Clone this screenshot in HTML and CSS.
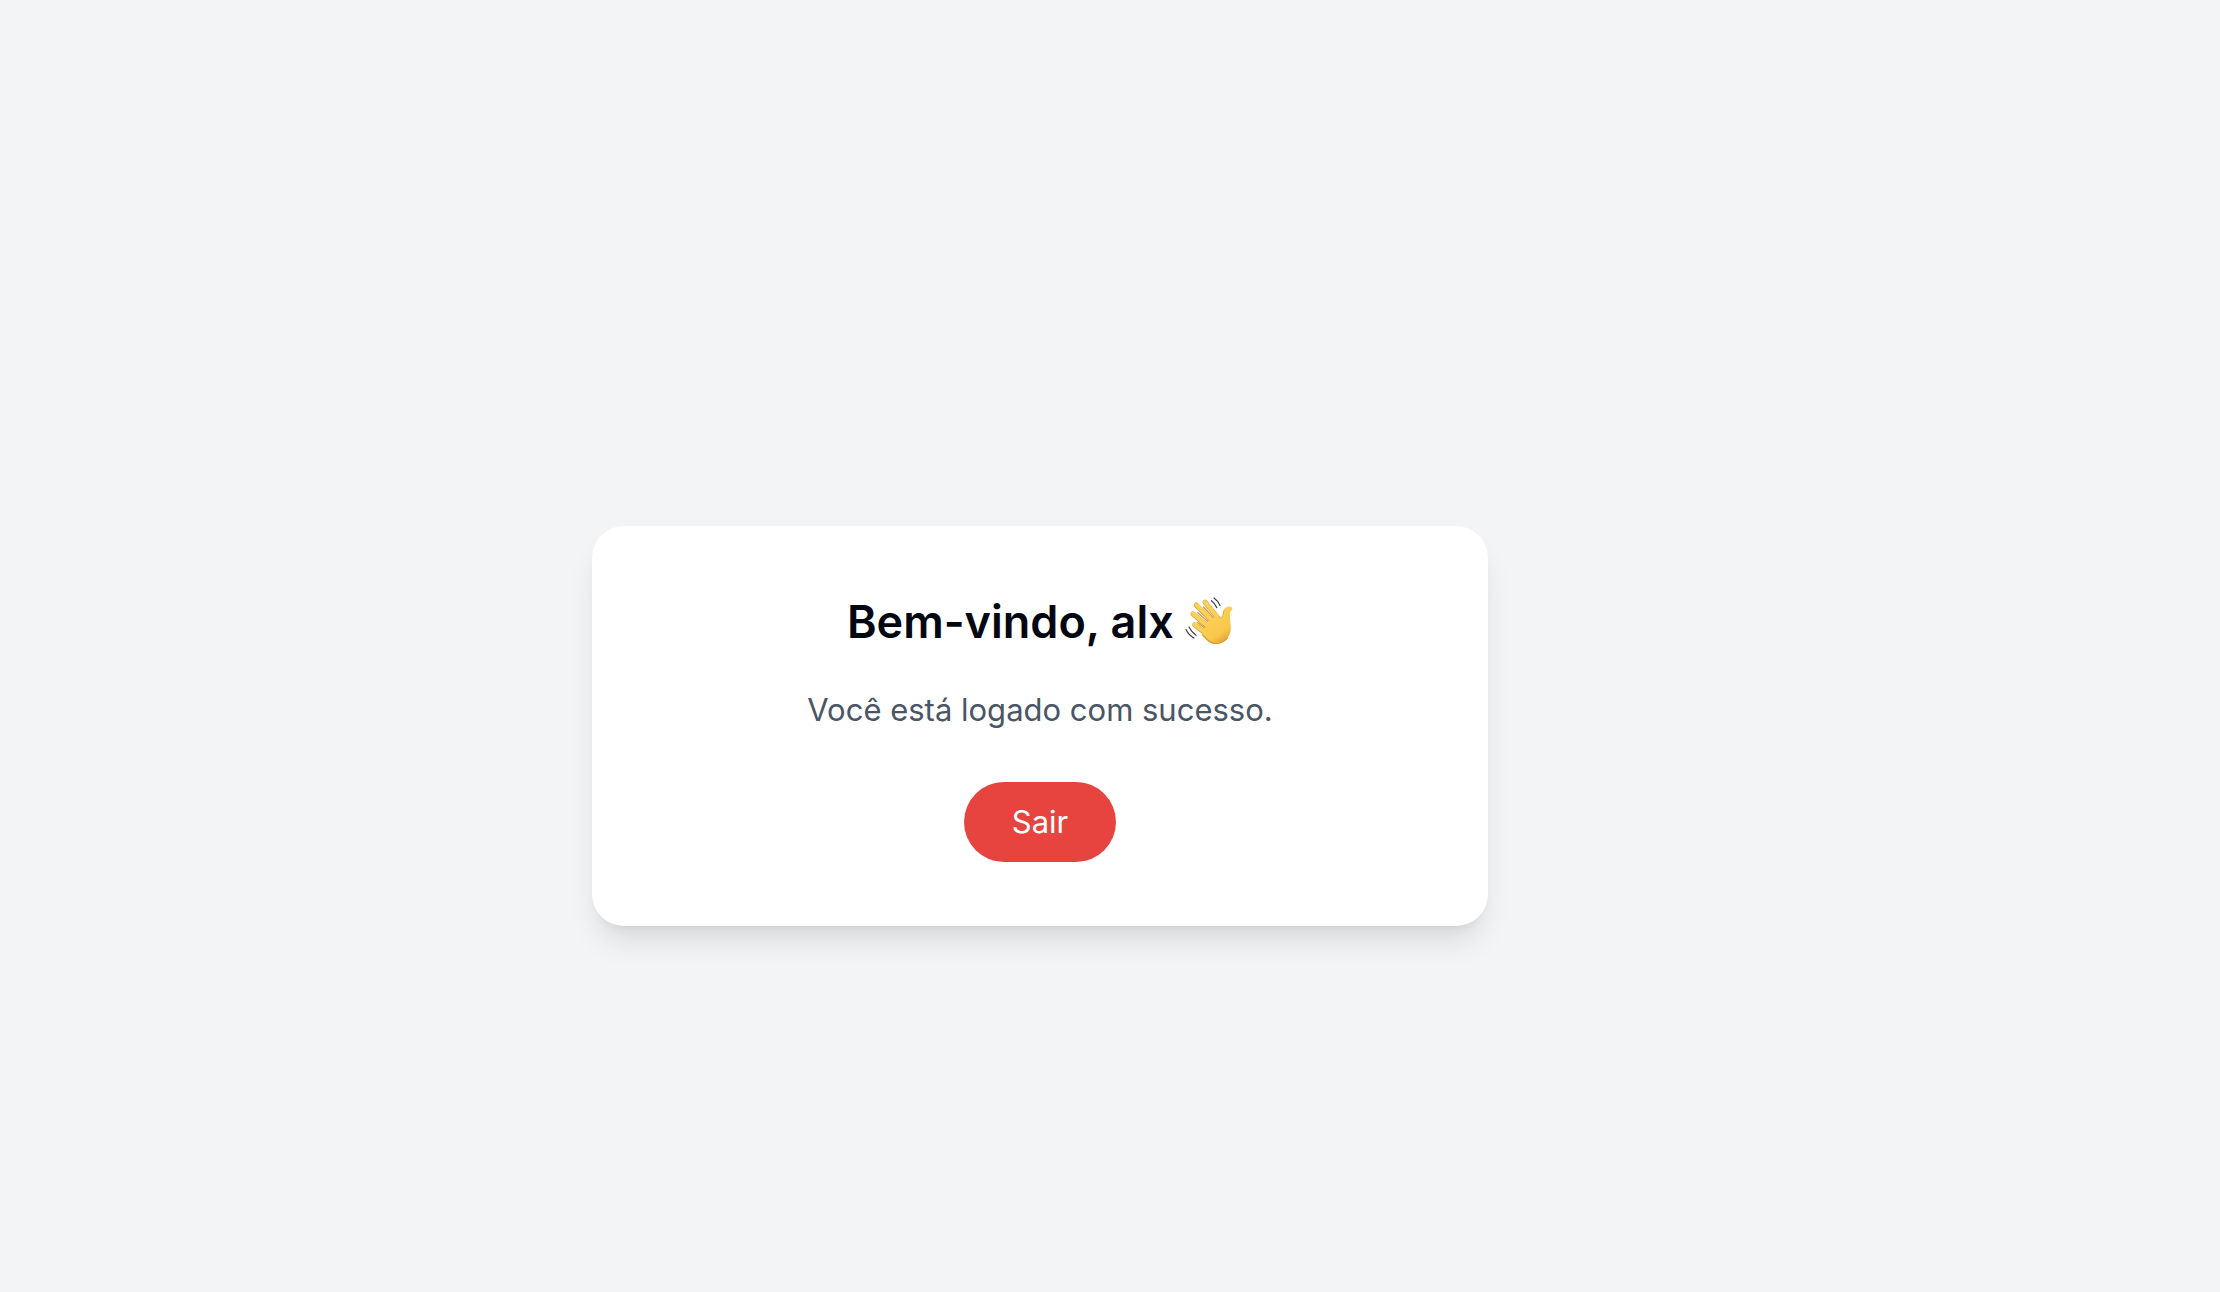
FILE: index.html
```html
<!DOCTYPE html>
<html lang="pt-BR">
<head>
  <meta charset="utf-8">
  <meta name="viewport" content="width=device-width, initial-scale=1">
  <title>Bem-vindo</title>
  <link rel="stylesheet" href="styles.css">
</head>
<body>
  <main class="page">
    <section class="card">
      <h1 class="title">Bem-vindo, alx
        <svg class="wave" viewBox="0 0 48 48" role="img" aria-label="Mão acenando">
          <defs>
            <linearGradient id="palm" x1="0.2" y1="0.1" x2="0.7" y2="1">
              <stop offset="0" stop-color="#fbd35c"/>
              <stop offset="0.7" stop-color="#f9c74a"/>
              <stop offset="1" stop-color="#e0a036"/>
            </linearGradient>
          </defs>
          <g fill="none" stroke-linecap="round">
            <path stroke="#dc9c34" stroke-width="5" d="M20 5.200L33 21M11.200 8L28 25M8 16.800L25 31.500M9.700 27.800L24 39"/>
            <path stroke="#fbd158" stroke-width="4" d="M20 5L33 20.700M11.200 7.700L28 24.700M8 16.500L25 31.200M9.700 27.500L24 38.700"/>
          </g>
          <path fill="url(#palm)" d="M22 26L30.500 19L34.500 19.500C36.200 20.800 37.400 20 37.800 18L38.800 13.300C39.600 10.300 42.300 9.200 45 9.600C47.600 10 48 12.500 46.300 13.700C44.800 14.800 44.700 17 44.900 20C45.200 25 46.400 29.500 45.500 34.500C44.200 41.300 37.500 47.200 30.800 47C27.500 46.800 25 45 22.500 42.800L17.500 37.500L19 32Z"/>
          <g fill="none" stroke-linecap="round">
            <path stroke="#d8952b" stroke-width="1.100" d="M18.500 10L28.300 20.500M12.500 15.500L22.800 24.500M12.500 25.500L19.500 30.800M17.500 38L22.500 43Q26 46.500 31 46.500Q38 46.300 42.500 41"/>
            <path stroke="#e6aa3a" stroke-width="1" d="M34.500 19.800Q37.300 21.500 38 18L39 13.500"/>
          </g>
          <g fill="none" stroke="#3d4145" stroke-width="1.200" stroke-linecap="round">
            <path d="M26.500 3.700Q29.700 6 31.800 10.700M29 1Q32.700 3.500 35 8.500M4 30Q6.500 35 11 38.300M1 32.500Q4 38.500 9 41"/>
          </g>
        </svg>
      </h1>
      <p class="message">Você está logado com sucesso.</p>
      <button class="logout" type="button">Sair</button>
    </section>
  </main>
</body>
</html>
```
FILE: styles.css
```css
* {
  box-sizing: border-box;
  margin: 0;
}

body {
  background: #f3f4f6;
  color: #030712;
  font-family: Inter, "Liberation Sans", sans-serif;
  font-size: 31px;
  line-height: 48px;
}

.page {
  display: flex;
  align-items: center;
  justify-content: center;
  min-height: 100vh;
  padding-top: 160px;
  padding-right: 140px;
}

.card {
  width: 100%;
  max-width: 896px;
  padding: 64px;
  border-radius: 32px;
  background: #fff;
  box-shadow: 0 20px 30px -6px rgb(0 0 0 / 10%), 0 8px 12px -8px rgb(0 0 0 / 10%);
  text-align: center;
}

.title {
  margin-bottom: 32px;
  font-size: 45px;
  font-weight: 600;
  line-height: 64px;
}

.wave {
  width: 48px;
  height: 48px;
  vertical-align: -7px;
}

.message {
  margin-bottom: 48px;
  color: #4a5565;
}

.logout {
  display: block;
  margin: 0 auto;
  padding: 16px 48px;
  border: 0;
  border-radius: 40px;
  background: #e7433f;
  color: #fff;
  font: inherit;
  cursor: pointer;
}
```
